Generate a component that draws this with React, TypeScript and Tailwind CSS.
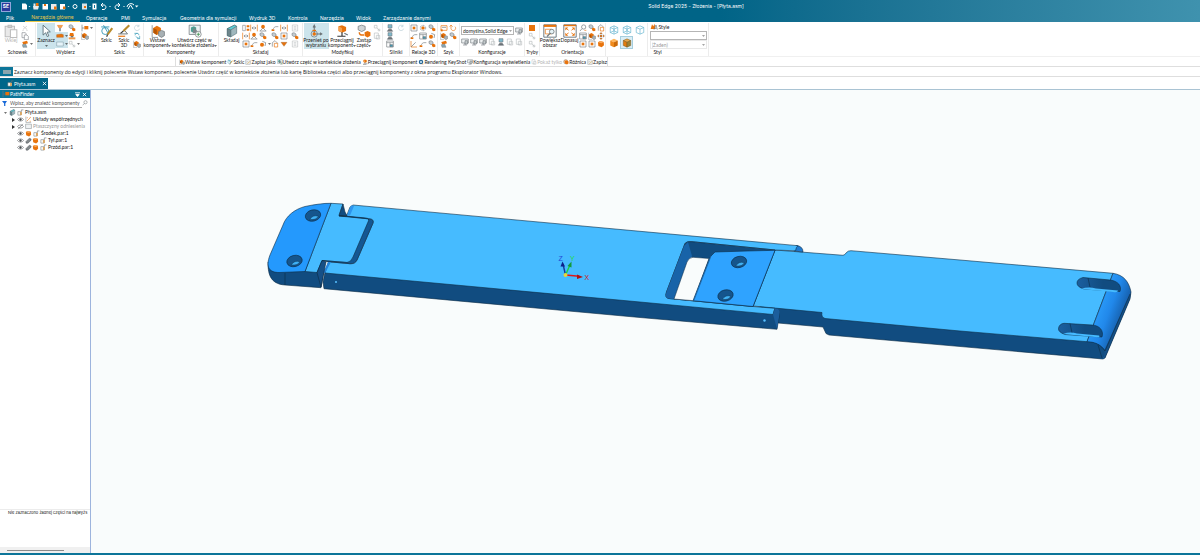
import { ReactNode } from "react";
import clsx from "clsx";

const O = "#e8730c";
const G = "#6d7478";
const T = "#3d9dba";

const ICONS: Record<string, ReactNode> = {
  paste: (
    <g fill="#e9e9e9" stroke="#bdbdbd" strokeWidth="0.9">
      <path d="M1 2h8v9H1z" />
      <path d="M3.5 1h3v2h-3z" fill="#cfcfcf" />
      <path d="M5.5 5h5.5v6.5H5.5z" fill="#fff" />
    </g>
  ),
  cut: (
    <path d="M3 8l6-5M3 3l6 5M2 9.5h2M8 9.5h2" stroke="#c2c2c2" fill="none" />
  ),
  copy: (
    <g fill="#fff" stroke={G} strokeWidth="0.8">
      <path d="M1.5 1h5l1 1.500v6h-6z" />
      <path d="M5 4.500h4l2 2v5H5z" />
    </g>
  ),
  brush: (
    <g>
      <path d="M2 3l7-2 1.500 4-7 2z" fill={O} />
      <path d="M2 7l5-1 2 5H3z" fill="#8aa5b0" stroke={G} strokeWidth="0.6" />
    </g>
  ),
  cursor: (
    <path d="M3.500 1v8.500l2.200-2 1.400 3.300 1.300-.6L7 7l2.700-.3z" fill="#fff" stroke="#4f6570" strokeWidth="0.7" />
  ),
  filter: (
    <g>
      <path d="M2 2h8L8 5.500H4z" fill="#f4a055" stroke={O} strokeWidth="0.6" />
      <path d="M5 6h2v5H5z" fill={G} />
    </g>
  ),
  bar: <path d="M1 4l7-1 3 1v4H1z" fill={O} stroke="#a24d05" strokeWidth="0.5" />,
  rect: <path d="M1 3h10v6H1z" fill="#e6f4fa" stroke="#7f98a3" strokeWidth="0.8" />,
  stamp: (
    <g>
      <path d="M3 1.500h5L9 6H2z" fill={O} />
      <path d="M1 8h10v3H1z" fill="#f09a4b" />
      <path d="M4 6h4v2H4z" fill={G} />
    </g>
  ),
  link: (
    <g>
      <path d="M1.500 2l3-1 3 2v3l-3 1-3-2z" fill="#c5cccf" stroke={G} strokeWidth="0.800" />
      <path d="M6 6.500l2.500-1L11 7v3l-2.500 1L6 9.500z" fill={O} />
    </g>
  ),
  linkGray: (
    <g fill="none" stroke="#b9bec0">
      <path d="M2 2h4v4H2z" />
      <path d="M6 6l4 4" />
      <circle cx="9" cy="9" r="1.500" />
    </g>
  ),
  tree: (
    <g>
      <path d="M1.500 1v10M1.500 6H5" stroke={G} fill="none" />
      <path d="M5 3h6v5H5z" fill={O} />
    </g>
  ),
  box: (
    <g>
      <path d="M6 1l4.500 2L6 5.200 1.500 3z" fill="#ffb65c" />
      <path d="M1.500 3L6 5.200V11L1.500 9z" fill="#f08a1c" />
      <path d="M10.500 3L6 5.200V11l4.500-2z" fill="#cc6a08" />
    </g>
  ),
  boxEdge: (
    <g stroke="#6b531e" strokeWidth="0.500">
      <path d="M6 1l4.500 2L6 5.200 1.500 3z" fill="#e7a54a" />
      <path d="M1.500 3L6 5.200V11L1.500 9z" fill="#e17c10" />
      <path d="M10.500 3L6 5.200V11l4.500-2z" fill="#9b8236" />
    </g>
  ),
  solid: (
    <g>
      <path d="M1.500 3.500L5 1.500l5 1.500.5 5L7 11 2 9z" fill={O} />
      <path d="M1.500 3.500L5 1.500l5 1.500-3.500 2z" fill="#f7a95c" />
    </g>
  ),
  wire: (
    <path d="M6 1l4.500 2v6L6 11 1.500 9V3zM1.500 3L6 5l4.500-2M6 5v6M6 1v6M1.500 9L6 7l4.500 2" fill="none" stroke="#63b3cf" strokeWidth="0.800" />
  ),
  wireOpen: (
    <path d="M6 1l4.500 2v6L6 11 1.500 9V3zM1.500 3L6 5l4.500-2M6 5v6" fill="none" stroke="#63b3cf" strokeWidth="0.800" />
  ),
  sketch: (
    <g fill="none">
      <path d="M1 2.500h7M3 1l4 7" stroke={T} strokeWidth="0.800" />
      <circle cx="4.500" cy="6" r="3" stroke={T} strokeWidth="0.800" />
      <path d="M10.500 3.500L6.500 9" stroke="#b98b2c" strokeWidth="1.800" />
      <path d="M6.500 9l-.8 2" stroke="#333" />
    </g>
  ),
  sketch3d: (
    <g fill="none">
      <path d="M1 8.500h8L7 6" stroke={G} strokeWidth="0.800" />
      <path d="M10.500 1L5.500 6" stroke="#b98b2c" strokeWidth="1.800" />
      <path d="M5.500 6L3 8" stroke="#333" />
      <path d="M1 10.500h6" stroke={O} />
    </g>
  ),
  swirl: <path d="M9 3a4 4 0 1 0 1 4M9 1v3H6" fill="none" stroke="#b9ced6" />,
  swirlTeal: (
    <path d="M2 2h5M3 5a3 3 0 0 1 6 0M4 7l6 3M10 6v4H6" fill="none" stroke={T} />
  ),
  part: (
    <g>
      <path d="M2 3.500l3-2 3.500 2v4L5 9.500l-3-2z" fill={O} />
      <path d="M2 3.500L5 5v4.500l-3-2z" fill="#b55605" />
      <path d="M6.500 6.500L9 5.500l2.500 1V10L9 11.500 6.500 10z" fill="#a7b0b4" stroke={G} strokeWidth="0.600" />
      <path d="M1 1v10.500h5" stroke={G} strokeWidth="0.600" fill="none" />
    </g>
  ),
  create: (
    <g>
      <path d="M1 1h9.500v8H1z" fill="#edf2f4" stroke={G} strokeWidth="0.600" />
      <path d="M2.500 3l2.500-1 2 1v3.500l-2 1-2.500-1z" fill="#4e9f91" />
      <path d="M5 3l3 3v2H4z" fill="#7c8589" />
      <circle cx="8.800" cy="8.800" r="2.500" fill="#fff" stroke={G} strokeWidth="0.600" />
      <path d="M8.800 7.300v3M7.300 8.800h3" stroke="#3c8f4f" strokeWidth="0.700" />
    </g>
  ),
  assemble: (
    <g stroke="#4c6a72" strokeWidth="0.500">
      <path d="M2 4l6-3 2 1v6L5 11l-3-1z" fill="#9fb7bd" />
      <path d="M2 4l3 1v6l-3-1z" fill="#6f868c" />
      <path d="M2 4l6-3 2 1-5 3z" fill="#5ed0d8" />
    </g>
  ),
  mate: (
    <g>
      <path d="M1 2h4v8H1z" fill="#fff" stroke={G} strokeWidth="0.800" />
      <path d="M7 2h4v3H7zM7 7h4v3H7z" fill={O} />
    </g>
  ),
  axis: (
    <g>
      <path d="M1 10.500h10M6 6L2 10M6 6l4 4" stroke={G} fill="none" />
      <circle cx="6" cy="4" r="2.800" fill={O} />
    </g>
  ),
  flush: (
    <g>
      <path d="M1 1v10M11 1v10" stroke={O} fill="none" />
      <path d="M3 6h6M5 4L3 6l2 2M7 4l2 2-2 2" fill="none" stroke={G} strokeWidth="0.900" />
    </g>
  ),
  angle: (
    <g fill="none">
      <path d="M1.500 1.500v9h9" stroke={O} />
      <path d="M1.500 10.500l7-7" stroke={G} />
    </g>
  ),
  cam: (
    <g>
      <circle cx="4.500" cy="7" r="3" fill={O} />
      <path d="M5 2l5 2-1 5" stroke={G} fill="none" />
    </g>
  ),
  gear: (
    <g fill="none" stroke={G}>
      <circle cx="6" cy="6" r="4" strokeDasharray="1.500 0.800" />
      <circle cx="6" cy="6" r="2" fill={O} stroke={O} />
    </g>
  ),
  path: (
    <g fill="none">
      <path d="M1 9c3 0 3-5 6-5h4" stroke={G} strokeWidth="0.900" />
      <path d="M1 8h4v2.500H1z" fill={O} />
    </g>
  ),
  pulley: (
    <g fill="none">
      <path d="M2 10V4l4-3 4 4" stroke={G} strokeWidth="0.900" />
      <path d="M5 5h5v5.500H5z" stroke={O} />
    </g>
  ),
  frame: (
    <g fill="none">
      <path d="M1.500 1.500h9v9h-9z" stroke={G} strokeWidth="0.900" />
      <path d="M4 4h4v4H4z" fill={O} />
    </g>
  ),
  anchor: <path d="M1.500 3.500h9L6 9.500z" fill={O} stroke="#8c5a2a" strokeWidth="0.500" />,
  doc: (
    <g fill="#fff" stroke="#b8bcbe" strokeWidth="0.900">
      <path d="M2 1.500h8v9H2z" />
      <path d="M4 4h4M4 6h4M4 8h4" />
    </g>
  ),
  move: (
    <g fill="none">
      <path d="M4.500 8V1M3.500 3l1-2 1 2" stroke={G} strokeWidth="0.900" />
      <path d="M6 8.500h5M9.500 7.500l1.500 1-1.500 1" stroke={G} strokeWidth="0.900" />
      <circle cx="4.500" cy="8.500" r="2.700" stroke={G} strokeWidth="0.600" />
      <circle cx="4.500" cy="8.500" r="1.500" fill={O} />
      <path d="M3 5.500h3" stroke={O} />
    </g>
  ),
  drag: (
    <g>
      <path d="M3 2l3-1 3.500 1.500V6L6 7.500 3 6z" fill={O} />
      <path d="M3 2l3 1.500v4L3 6z" fill="#f6a04d" />
      <path d="M6 7v3M2 10.500h7" stroke="#333" fill="none" />
      <path d="M8 8l3 1.500" stroke={G} />
    </g>
  ),
  replace: (
    <g>
      <path d="M1 2l3-1 3 1v3L4 6.500 1 5z" fill="#cfd4d6" stroke={G} strokeWidth="0.600" />
      <path d="M6.500 7L9 6l2.500 1v3L9 11.500 6.500 10z" fill={O} />
      <path d="M2 7c0 2.500 1 2.500 4 2.500" stroke={O} strokeWidth="1.300" fill="none" />
    </g>
  ),
  motor: (
    <g>
      <path d="M3 1h6v5H3z" fill="#7fb9cb" stroke={G} strokeWidth="0.800" />
      <path d="M6 6v2M2 11l2-3h4l2 3z" fill={G} stroke={G} strokeWidth="0.800" />
    </g>
  ),
  table: (
    <g fill="#fff" stroke={G} strokeWidth="0.900">
      <path d="M1 1.500h10v9H1z" />
      <path d="M1 4h10M6 4v6" />
      <path d="M6 7h4v3H6z" fill={T} />
    </g>
  ),
  square: <path d="M1.500 1.500h9v9h-9z" fill={O} />,
  pattern: (
    <g>
      <path d="M1.500 2.500h9v7h-9z" fill="none" stroke={O} />
      <path d="M1 8h3v3H1z" fill={O} />
      <path d="M3 5h6" stroke={G} />
    </g>
  ),
  undoArc: <path d="M3 2v5a3.500 3.500 0 1 0 6-3M1 4l2-2.500L5.500 4" fill="none" stroke={O} />,
  display: (
    <g fill="none" stroke={G} strokeWidth="0.900">
      <path d="M1 1.500h10v6H1zM6 7.500v3M3 10.500h6" fill="#edf0f1" />
      <path d="M6 4h4v5H6z" fill="#c4cacc" />
    </g>
  ),
  displayGray: (
    <g fill="none" stroke="#b5babc" strokeWidth="0.900">
      <path d="M2 1.500h6v8H2zM5 5h5v5.500H5z" />
    </g>
  ),
  zoomArea: (
    <g>
      <path d="M.7.700h10.600v10.600H.7z" fill="#fff" stroke="#52616a" strokeWidth="0.700" />
      <path d="M.7.700h10.600v1.800H.7z" fill={O} />
      <path d="M2 4.500h5v4H2z" fill="none" stroke={O} strokeWidth="0.600" />
      <circle cx="7.500" cy="6.500" r="2" fill="#e5f1f5" stroke={G} strokeWidth="0.700" />
      <path d="M6 8l-2.500 2.700" stroke={G} />
    </g>
  ),
  fit: (
    <g>
      <path d="M.7.700h10.600v10.600H.7z" fill="#fff" stroke="#52616a" strokeWidth="0.700" />
      <path d="M.7.700h10.600v1.200H.7z" fill={O} />
      <path d="M2 3h2.500L2 5.500zM10 3v2.500L7.500 3zM2 10V7.500L4.500 10zM10 10H7.500L10 7.500z" fill={O} />
      <path d="M3 4l6 5M9 4L3 9" stroke={O} strokeWidth="0.700" />
      <path d="M4.700 5.200h2.600v2.600H4.700z" fill="#fff" />
    </g>
  ),
  lens: (
    <g fill="none" stroke={G}>
      <circle cx="7" cy="4.500" r="3.200" />
      <path d="M4.500 7L1.500 10.500" />
    </g>
  ),
  lensZoom: (
    <g fill="none" stroke={G}>
      <circle cx="7" cy="4.500" r="3.200" />
      <path d="M4.500 7L1.500 10.500" />
      <path d="M8 9.500h3" stroke={O} />
    </g>
  ),
  pan: (
    <path d="M6 .5l2 2.500H4zM6 11.500L4 9h4zM.5 6L3 4v4zM11.500 6L9 8V4zM4.500 4.500h3v3h-3z" fill={O} stroke={G} strokeWidth="0.400" />
  ),
  styles: (
    <g>
      <path d="M1 9l2-7 2 3 2-4 1 8z" fill={O} />
      <path d="M6 10l3-7 2 7M7 8h3" stroke={G} fill="none" />
    </g>
  ),
  save: (
    <g>
      <path d="M1.500 1.500h7l2 2v7h-9z" fill="#fff" stroke={G} strokeWidth="0.800" />
      <path d="M3 5h4M3 7h2" stroke={G} strokeWidth="0.600" />
      <path d="M5 9.500l5-5" stroke="#c9962e" strokeWidth="1.300" fill="none" />
    </g>
  ),
  render: (
    <g>
      <circle cx="6" cy="6" r="4.500" fill="#2a6a96" />
      <circle cx="6" cy="6" r="2" fill="#d8ecf6" />
      <path d="M8 10h3" stroke={O} />
    </g>
  ),
  diff: (
    <g>
      <circle cx="5.500" cy="5.500" r="4.300" fill="#f2b27a" stroke={G} strokeWidth="0.700" />
      <path d="M4 4l4-1 3 2v4L8 11 4 9z" fill={O} />
    </g>
  ),
  eye: (
    <g fill="none" stroke="#4a4f52" strokeWidth="0.900">
      <path d="M.8 6C3 2.500 9 2.500 11.200 6 9 9.500 3 9.500.8 6z" />
      <circle cx="6" cy="6" r="1.600" fill="#4a4f52" />
    </g>
  ),
  eyeOff: (
    <g fill="none" stroke="#4a4f52" strokeWidth="0.900">
      <path d="M.8 6C3 2.500 9 2.500 11.200 6 9 9.500 3 9.500.8 6z" />
      <path d="M2 10.500L10 1.500" />
    </g>
  ),
  clip: (
    <path d="M1.500 8l6-6L10.500 3.500 10 6l-5 4.500H2z" fill="#83898c" stroke="#4b5154" strokeWidth="0.800" />
  ),
  lock: (
    <g>
      <path d="M1.500 4.500h5v6h-5z" fill="#fff" stroke={G} strokeWidth="0.900" />
      <path d="M5 5h3.500v5.500H5z" fill="#d9a766" />
      <path d="M7.500 5V1.500H11" stroke={G} fill="none" />
    </g>
  ),
  csys: (
    <g fill="none">
      <path d="M1.500 1v10h9" stroke={G} strokeWidth="0.800" />
      <path d="M3 9l6-6M3 3h2M8 9h2M9 1.500v2" stroke={O} />
    </g>
  ),
  plane: <path d="M1 2h10v7.500H1z" fill="#f1f3f4" stroke="#8c9396" />,
};

function Icon({ name, className = "size-2" }: { name: string; className?: string }) {
  return (
    <svg viewBox="0 0 12 12" className={clsx("shrink-0", className)} aria-hidden="true">
      {ICONS[name]}
    </svg>
  );
}

function Caret({ className = "text-[#444]" }: { className?: string }) {
  return (
    <svg viewBox="0 0 4 2" className={clsx("w-[3px] h-[2px] shrink-0", className)} aria-hidden="true">
      <path d="M0 0h4L2 2z" fill="currentColor" />
    </svg>
  );
}

function Group({ label, className, children }: { label?: string; className?: string; children: ReactNode }) {
  return (
    <section className={clsx("flex flex-col shrink-0 border-r border-[#ececec]", className)}>
      <div className="flex h-[26px] items-start justify-center">{children}</div>
      <h3 className="h-[7px] text-center leading-[6px]">{label}</h3>
    </section>
  );
}

type BigProps = { icon: string; lines: string[]; active?: boolean; caret?: boolean; muted?: boolean; className?: string };

function Big({ icon, lines, active, caret, muted, className }: BigProps) {
  return (
    <button
      className={clsx(
        "flex flex-col items-center h-[26px] pt-px shrink-0 leading-[5px]",
        active && "bg-[#cce4ec]",
        muted && "text-[#b3b3b3]",
        className
      )}
    >
      <Icon name={icon} className="size-[14px]" />
      {lines.map((line, i) => (
        <span key={line} className="flex items-center">
          {line}
          {caret && i === lines.length - 1 && lines.length > 1 && <Caret />}
        </span>
      ))}
      {caret && lines.length === 1 && <Caret className="text-[#444] mt-[2px]" />}
    </button>
  );
}

// one column of small ribbon buttons
function Stack({ icons, carets = [], className = "w-[9px]" }: { icons: string[]; carets?: number[]; className?: string }) {
  return (
    <div className={clsx("flex flex-col shrink-0 pt-px", className)}>
      {icons.map((name, i) => (
        <button key={i} aria-label={name} className="flex items-center gap-px h-2">
          <Icon name={name} />
          {carets.includes(i) && <Caret />}
        </button>
      ))}
    </div>
  );
}

function Picker({ label, value, muted, className }: { label: string; value: string; muted?: boolean; className?: string }) {
  return (
    <div className={clsx("flex items-center border bg-white", muted ? "border-[#e8e8e8]" : "border-[#b5b5b5]", className)}>
      <select
        aria-label={label}
        className={clsx("appearance-none grow min-w-0 h-full pl-px outline-none", muted && "text-[#999]")}
      >
        <option>{value}</option>
      </select>
      <Caret className="text-[#888] mr-px" />
    </div>
  );
}

const TABS = [
  { name: "Plik", width: "w-[25px]" },
  { name: "Narzędzia główne", width: "w-[55px]" },
  { name: "Operacje", width: "w-[35px]" },
  { name: "PMI", width: "w-[21px]" },
  { name: "Symulacja", width: "w-[38px]" },
  { name: "Geometria dla symulacji", width: "w-[69px]" },
  { name: "Wydruk 3D", width: "w-[39px]" },
  { name: "Kontrola", width: "w-[32px]" },
  { name: "Narzędzia", width: "w-[36px]" },
  { name: "Widok", width: "w-[27px]" },
  { name: "Zarządzanie danymi", width: "w-[60px]" },
];

const QUICK = [
  { name: "Wstaw komponent", icon: "part" },
  { name: "Szkic", icon: "sketch" },
  { name: "Zapisz jako", icon: "save" },
  { name: "Utwórz część w kontekście złożenia", icon: "create" },
  { name: "Przeciągnij komponent", icon: "drag" },
  { name: "Rendering KeyShot", icon: "render" },
  { name: "Konfiguracja wyświetlenia", icon: "display" },
  { name: "Pokaż tylko", icon: "displayGray", muted: true },
  { name: "Różnica", icon: "diff" },
  { name: "Zapisz", icon: "save" },
];

function TitleBar() {
  return (
    <div className="flex items-center h-[12px] text-white">
      <div className="flex items-center gap-[3px] w-[300px]">
        <div className="ml-px mt-px flex items-center justify-center w-[10px] h-[10px] bg-[#2b3a9c] border border-[#8fa4dc] font-bold leading-[5px]">
          SE
        </div>
        <svg viewBox="0 0 120 10" className="w-[120px] h-[10px] ml-[5px]" aria-hidden="true">
          <g fill="#fff">
            <path d="M3 2.500h3.500l1.500 1.500v4.500H3z" />
            <path d="M14 5h6l-1 3.500h-4.500zM14.500 2.500h2v3h-2z" fill="#e7ebed" />
            <path d="M23.500 3h5.500v5.500h-5.500z" />
            <path d="M32 3h5.500v5.500h-5.500z" fill="#e7ebed" />
            <path d="M41 3h5v5.500h-5z" />
            <path d="M63 2.500h5v6h-5z" fill="#d9e4e8" />
            <path d="M73.500 2.500h4v6h-4z" />
            <path d="M9.500 5h2l-1 1zM48.500 5h2l-1 1zM70 5h2l-1 1zM90 5h2l-1 1zM104 5h2l-1 1zM116 4.500h3.500L117.500 6.500z" />
          </g>
          <g fill={O}>
            <path d="M17 2h2.500v3h-2.500zM25 3h2v2h-2zM35 5.500h2.500v3h-2.500zM44 5.500h2.500v2.500h-2.500zM65 5h2v2h-2z" />
            <path d="M75 4h1v3h-1z" fill="#0c7599" />
          </g>
          <g fill="none" stroke="#fff" strokeWidth="1">
            <circle cx="56" cy="5.500" r="2" />
            <path d="M83 8.500h2c3-1 2-4.500 0-4.500h-3M84 2L82 4l2 2" />
            <path d="M100 8.500h-2c-3-1-2-4.500 0-4.500h3M99 2l2 2-2 2" />
            <path d="M109 8l2.500-4 2.500 4M108 6a4 4 0 0 1 7-2" />
          </g>
        </svg>
      </div>
      <h1 className="grow text-center pr-[108px]">Solid Edge 2025 - Złożenia - [Płyta.asm]</h1>
    </div>
  );
}

function Ribbon() {
  return (
    <div className="flex h-[35px] pt-px bg-white text-[#222] border-b border-[#f0f0f0]">
      <Group label="Schowek" className="w-[36px]">
        <Big icon="paste" lines={["Wklej"]} muted className="w-[19px]" />
        <Stack icons={["cut", "copy", "brush"]} carets={[2]} className="w-[13px]" />
      </Group>
      <Group label="Wybierz" className="w-[60px]">
        <Big icon="cursor" lines={["Zaznacz"]} active caret className="w-[18px]" />
        <div className="flex flex-col pt-px w-[13px]">
          <button aria-label="Filtr" className="flex h-2 pl-px"><Icon name="filter" /></button>
          <button aria-label="Części" className="flex items-center gap-px h-2 px-px bg-[#cce4ec]"><Icon name="bar" /><Caret /></button>
          <button aria-label="Ramka" className="flex items-center gap-px h-2 px-px bg-[#cce4ec]"><Icon name="rect" /><Caret /></button>
        </div>
        <Stack icons={["link", "stamp", "linkGray"]} carets={[2]} className="w-[13px]" />
        <Stack icons={["tree", "part"]} carets={[0]} className="w-[13px]" />
      </Group>
      <Group label="Szkic" className="w-[48px]">
        <Big icon="sketch" lines={["Szkic"]} className="w-[18px]" />
        <Big icon="sketch3d" lines={["Szkic", "3D"]} className="w-[17px]" />
        <Stack icons={["swirl", "swirlTeal", "part"]} />
      </Group>
      <Group label="Komponenty" className="w-[75px]">
        <Big icon="part" lines={["Wstaw", "komponent"]} caret className="w-[27px]" />
        <Big icon="create" lines={["Utwórz część w", "kontekście złożenia"]} caret className="w-[47px]" />
      </Group>
      <Group label="Składaj" className="w-[84px]">
        <Big icon="assemble" lines={["Składaj"]} className="w-[21px]" />
        <Stack icons={["mate", "flush", "frame"]} className="w-2" />
        <Stack icons={["flush", "axis", "path"]} />
        <Stack icons={["axis", "link", "cam"]} carets={[2]} className="w-[12px]" />
        <Stack icons={["path", "link", "pulley"]} />
        <Stack icons={["flush", "frame", "anchor"]} className="w-[11px]" />
        <Stack icons={["doc", "link", "doc"]} />
      </Group>
      <Group label="Modyfikuj" className="w-[80px]">
        <Big icon="move" lines={["Przenieś po", "wybraniu"]} active className="w-[25px]" />
        <Big icon="drag" lines={["Przeciągnij", "komponent"]} caret className="w-[27px]" />
        <Big icon="replace" lines={["Zastąp", "część"]} caret className="w-[17px]" />
        <Stack icons={["linkGray", "displayGray"]} />
      </Group>
      <Group label="Silniki" className="w-[27px]">
        <Stack icons={["motor", "motor", "table"]} className="w-[11px]" />
        <Stack icons={["swirl"]} />
      </Group>
      <Group label="Relacje 3D" className="w-[28px]">
        <Stack icons={["frame", "path", "angle"]} />
        <Stack icons={["gear", "table", "path"]} />
        <Stack icons={["link", "cam", "link"]} />
      </Group>
      <Group label="Szyk" className="w-[22px]">
        <Stack icons={["pattern", "part", "brush"]} />
        <Stack icons={["undoArc", "link"]} />
      </Group>
      <Group label="Konfiguracje" className="w-[65px]">
        <div className="flex flex-col w-[62px] gap-[3px] pt-[3px]">
          <div className="flex items-center gap-px">
            <Picker label="Konfiguracja" value="domyślna,Solid Edge" className="w-[53px] h-[9px]" />
            <button aria-label="Ustawienia"><Icon name="display" className="size-2 block" /></button>
          </div>
          <div className="flex justify-between">
            {["display", "display", "display", "displayGray", "motor", "displayGray", "displayGray"].map((name, i) => (
              <button key={i} aria-label={`Widok ${i + 1}`}><Icon name={name} className="size-2 block" /></button>
            ))}
          </div>
        </div>
      </Group>
      <Group label="Tryby" className="w-[15px]">
        <Stack icons={["square", "linkGray", "linkGray"]} className="w-2" />
      </Group>
      <Group label="Orientacja" className="w-[66px]">
        <Big icon="zoomArea" lines={["Powiększ", "obszar"]} className="w-[20px]" />
        <Big icon="fit" lines={["Dopasuj"]} className="w-[19px]" />
        <Stack icons={["lensZoom", "table", "frame"]} />
        <Stack icons={["link", "part", "frame"]} />
        <Stack icons={["pulley", "pan", "solid"]} className="w-2" />
      </Group>
      <Group className="w-[42px]">
        <div className="grid grid-cols-3 w-[39px]">
          {["wire", "wire", "wireOpen", "box", "boxEdge"].map((name, i) => (
            <button
              key={i}
              aria-label={`Styl widoku ${i + 1}`}
              className={clsx("flex items-center justify-center size-[13px]", i === 4 && "border border-[#a5cede] bg-[#dceef5]")}
            >
              <Icon name={name} className="size-[10px]" />
            </button>
          ))}
        </div>
      </Group>
      <Group className="w-[61px]">
        <div className="flex flex-col w-[57px]">
          <div className="flex items-center gap-px h-2"><Icon name="styles" />Style</div>
          <Picker label="Styl" value="" className="h-[9px]" />
          <Picker label="Styl elementu" value="(Żaden)" muted className="h-[9px]" />
          <span className="pl-[4px] leading-[7px]">Styl</span>
        </div>
      </Group>
    </div>
  );
}

const TREE = [
  { name: "Układy współrzędnych", icons: ["eye", "csys"], open: true },
  { name: "Płaszczyzny odniesienia", icons: ["eyeOff", "plane"], open: true, muted: true },
  { name: "Środek.par:1", icons: ["eye", "solid", "lock"] },
  { name: "Tył.par:1", icons: ["eye", "clip", "solid", "lock"] },
  { name: "Przód.par:1", icons: ["eye", "clip", "solid", "lock"] },
];

function PathFinder() {
  return (
    <aside className="flex flex-col w-[91px] shrink-0 bg-white border-r border-[#9db4dd] text-[#111]">
      <div className="flex items-center h-[8px] px-[2px] bg-[#0c7599] text-white">
        <Icon name="tree" />
        <h2 className="grow">PathFinder</h2>
        <button aria-label="Opcje" className="w-[7px]">
          <svg viewBox="0 0 6 6" className="size-[5px]"><path d="M0 1h6M1 3h4L3 5.500z" stroke="#fff" fill="#fff" /></svg>
        </button>
        <button aria-label="Zamknij" className="w-[6px]">
          <svg viewBox="0 0 6 6" className="size-[5px]"><path d="M1 1l4 4M5 1L1 5" stroke="#fff" /></svg>
        </button>
      </div>
      <div className="flex items-center h-[10px] px-[2px]">
        <svg viewBox="0 0 6 6" className="size-[5px] mr-[3px]"><path d="M0 0h6L4 3v3H2.500V3z" fill="#1769d8" /></svg>
        <input
          aria-label="Szukaj"
          placeholder="Wpisz, aby znaleźć komponenty"
          className="grow min-w-0 h-[9px] border-b border-[#aaa] outline-none placeholder:text-[#555]"
        />
        <Icon name="lens" className="size-[6px]" />
      </div>
      <ul className="pt-px grow leading-[7px]">
        <li className="flex items-center h-[7px] pl-[4px] gap-px">
          <Caret />
          <Icon name="assemble" className="size-[7px] ml-px" />
          <Icon name="lock" className="size-[7px]" />
          <span>Płyta.asm</span>
        </li>
        {TREE.map((row) => (
          <li key={row.name} className={clsx("flex items-center h-[7px] pl-[12px]", row.muted && "text-[#999]")}>
            <span className="w-[5px]">
              {row.open && (
                <svg viewBox="0 0 3 4" className="w-[3px] h-[4px]"><path d="M0 0l3 2-3 2z" fill="#333" /></svg>
              )}
            </span>
            {row.icons.map((name) => (
              <Icon key={name} name={name} className={clsx("size-[7px]", name !== "clip" && "mr-px")} />
            ))}
            <span>{row.name}</span>
          </li>
        ))}
      </ul>
      <p className="h-[38px] border-t border-[#ececec] pl-[8px] text-[4px] font-['Inter','Noto_Sans',sans-serif]">
        Nie zaznaczono żadnej części na najwyżs
      </p>
      <div className="flex items-center h-[6px] bg-[#f0f0f0] pl-[7px]">
        <div className="w-[57px] h-px bg-[#8a8a8a]" />
      </div>
    </aside>
  );
}

function Model() {
  const edge = { stroke: "#0c2b45", strokeWidth: 0.6, strokeLinejoin: "round" as const };
  return (
    <svg viewBox="91 90 1109 463" className="w-full h-full" role="img" aria-label="Płyta.asm">
      <defs>
        <linearGradient id="round" gradientUnits="userSpaceOnUse" x1="1098" y1="305" x2="1122" y2="314">
          <stop offset="0" stopColor="#2a9cfb" />
          <stop offset="0.500" stopColor="#2188ea" />
          <stop offset="1" stopColor="#1763b2" />
        </linearGradient>
        <linearGradient id="side" x1="0" x2="1">
          <stop offset="0" stopColor="#1b5f9f" />
          <stop offset="0.600" stopColor="#114c80" />
        </linearGradient>
      </defs>

      {/* hinge end */}
      <path d="M268 262C268 272 269 284 285 285L321 287.700L324 270L322 259L305 260z" fill="#114c80" {...edge} />
      <path d="M331 203.300L343 204L339 215.500L366 218Q370 218.500 369 222L353.500 259Q352 263 347 262.500L322 260.500L317 272.500L305 271.500z" fill="#46bbff" {...edge} />
      <path d="M331 203.300C324 203 312 205 305 206.500C295 209 286 216 283 225L270 255C265 268 270 272.500 279 272.500L305 271.500z" fill="#2499fd" {...edge} />
      <path d="M285 273v12" {...edge} />

      {/* right arm */}
      <path d="M753 300L822 306L880 318L1089 337L1106 349L1103 359L880 339.500L829 335L826 333.500L823 327L778 323z" fill="#114c80" {...edge} />
      <path d="M775 250L843 255.300Q845 255 846 253Q848 250.500 851 250.700L960 260L1113 273.300L1087 341.700L960 331L825 318.500Q821 317 822 312.500L753 306z" fill="#46bbff" {...edge} />
      <path d="M1113 273.300C1124 275 1129 282 1131 292L1130 299L1105 358L1103 359L1105 350C1100 344 1094 342 1087 341.700z" fill="url(#round)" />
      <path d="M1131 292L1130 299L1105 358L1103 357L1104 351z" fill="#155087" />
      <path d="M1087 341.700C1096 342 1101 345 1105 351L1103 359L1092 357z" fill="#114c80" />
      <path d="M1113 273.300C1124 275 1129 282 1131 292L1130 299L1105 358L1103 359M1113 273.300L1087 341.700C1096 342 1101 345 1105 351L1130 294M1098 345l4 13" fill="none" {...edge} />
      <path d="M1083 277.500L1110 280C1118 281 1122 286 1120 291.500L1084 289Q1077 287 1077 283Q1077 279 1083 277.500z" fill="url(#side)" {...edge} />
      <path d="M1081 289Q1088 286.500 1096 288.500L1118 290.500Q1118 293 1113 292z" fill="#46bbff" />
      <path d="M1088 278l2 9" {...edge} />
      <path d="M1064 323.300L1092 325C1100 325.500 1104 331 1102 337L1065 334.500Q1058 332 1058.500 328.500Q1059 324 1064 323.300z" fill="url(#side)" {...edge} />
      <path d="M1063 334Q1070 331.500 1077 333.500L1099 335.500Q1101 338 1095 337z" fill="#46bbff" />
      <path d="M1070 323.500l2 9" {...edge} />

      {/* main plate */}
      <path d="M325 272L775 309Q780 309 779.500 314L777 329.300L640 317.500L324 288.700L323 282z" fill="#114c80" {...edge} />
      <path d="M796 245.500Q803 246 803 252L794 251z" fill="#1f7ad0" {...edge} />
      <path
        fillRule="evenodd"
        d="M353 205L640 231.300L798 245.700Q796 247 795.500 250.800L775 250L692 241.700Q686 241.500 685 243.500L666.500 292Q664.500 298 669 298.500L753 306.500L775 308.300Q774 310 773 314.500L640 302L325 273L328.500 261.700L350 263.700Q355 264 357 260L373 223Q374 219.500 370 219L339 216L346.500 216L350 207z"
        fill="#46bbff"
        {...edge}
      />
      <path d="M339 215.500L366 218Q370 218.500 368 222L353 257Q351 262 347 262.500L322 260.500L328 261.700L350 263.700Q355 264 357 260L373 223Q374 219.500 370 219z" fill="#145792" {...edge} />
      <path d="M351 205.500L347 215.500L350 215.500L354 206z" fill="#2e95ee" />
      <path d="M343 204L339 215.500L347 215.500L345 212z" fill="#114c80" {...edge} />
      <path d="M328 262L323 273L325 273L331 262z" fill="#2485dd" />
      <path d="M775 308.300Q781 309 779.500 314L777 329L773 314.500Z" fill="#1c5e9c" />
      <path d="M317 272.500L322 260.500L326 262L321 287z" fill="#164f86" {...edge} />

      {/* pocket */}
      <path d="M692 241.700L775 250L753 306.500L669 298.500Q664.500 298 666.500 292L685 243.500Q687 241 692 241.700z" fill="#114c80" {...edge} />
      <path d="M688 242L692 256L674 299L669 298.500Q664.500 298 666.500 292L684 246z" fill="#1863a8" />
      <path d="M693 257.300L709 258.500L693.500 300.700L674 299L687 262Q689 257.500 693 257.300z" fill="#f9fcfc" stroke="#0c2b45" strokeWidth="0.500" />
      <path d="M715 252Q745 251 775 250.300L753 306.500L693 300.700L710 257z" fill="#2fa3ff" {...edge} />
      <path d="M711 256L694 300" stroke="#1c5e9c" strokeWidth="0.800" />

      {/* screw holes */}
      {[[313, 215.500], [294.500, 261], [739, 262], [725.500, 295.500]].map(([x, y]) => (
        <g key={x} transform={`rotate(-14 ${x} ${y})`}>
          <ellipse cx={x} cy={y} rx="7.800" ry="5.600" fill="#15558d" {...edge} />
          <path d={`M${x - 4} ${y + 3}q4 -4 9 -1q-3 3.500 -9 1z`} fill="#3fb0f5" stroke="#0c2b45" strokeWidth="0.400" />
        </g>
      ))}
      <circle cx="336" cy="282" r="1" fill="#58c0ff" />
      <circle cx="764.500" cy="320.500" r="1.200" fill="#58c0ff" />

      {/* axis triad */}
      <g strokeWidth="1.400">
        <path d="M565.500 275L563 264" stroke="#123a9e" />
        <path d="M562.500 261.500l2.500 5h-4.500z" fill="#0d1f8c" />
        <path d="M565.500 275L570 265" stroke="#1fd043" />
        <path d="M571.500 261.500l0 6-4-1.500z" fill="#149b3a" />
        <path d="M565.500 275L579 276.300" stroke="#e01818" />
        <path d="M583 277l-6 2v-4.500z" fill="#b01212" />
        <circle cx="565.500" cy="275" r="2" fill="#e8d43a" />
      </g>
      <g fontFamily="Liberation Sans, sans-serif" fontSize="7">
        <text x="558.500" y="261" fill="#2347d6">Z</text>
        <text x="570" y="261" fill="#22dd44">Y</text>
        <text x="584.500" y="279.500" fill="#cf2020">X</text>
      </g>
    </svg>
  );
}

export default function App() {
  return (
    <div className="flex flex-col min-h-screen bg-white font-['Lato','Noto_Sans',sans-serif] text-[5px] leading-[6px] whitespace-nowrap">
      <header className="bg-gradient-to-r from-[#006487] from-60% to-[#3f92ae] font-['Inter','Noto_Sans',sans-serif]">
        <TitleBar />
        <nav className="flex h-[10px] text-white">
          {TABS.map((tab, i) => (
            <button
              key={tab.name}
              className={clsx(
                "h-[10px] shrink-0 pt-px",
                tab.width,
                i === 1 ? "text-center text-[#e8c84a] border-b border-[#e8c84a]" : "text-left pl-[6px]"
              )}
            >
              {tab.name}
            </button>
          ))}
        </nav>
      </header>
      <Ribbon />
      <div className="flex h-[10px] pl-[175px] border-b border-[#dedede]">
        <div className="flex items-center gap-px border-x border-[#dedede] pl-[3px]">
          {QUICK.map((cmd) => (
            <button
              key={cmd.name}
              className={clsx("flex items-center shrink-0", cmd.muted ? "text-[#b5b5b5]" : "text-[#222]")}
            >
              <Icon name={cmd.icon} className="size-[6px]" />
              {cmd.name}
            </button>
          ))}
        </div>
      </div>
      <div className="flex items-center h-[10px] border-b border-[#dedede] font-['Open_Sans','Noto_Sans',sans-serif] text-[#111]">
        <div className="flex items-center justify-center w-[13px] h-[9px] mr-px bg-[#0c7599]">
          <div className="w-[8px] h-[4px] bg-[#8ba5ae]" />
        </div>
        <p>
          Zaznacz komponenty do edycji i kliknij polecenie Wstaw komponent, polecenie Utwórz część w kontekście złożenia lub kartę Biblioteka części albo przeciągnij komponenty z okna programu Eksplorator Windows.
        </p>
      </div>
      <div className="flex h-[13px] pt-px border-b border-[#a9c3d3]">
        <div className="flex items-center w-[48px] pl-[7px] bg-[#00668a] text-white">
          <Icon name="lock" className="size-[7px]" />
          <span className="grow">Płyta.asm</span>
          <button aria-label="Zamknij kartę" className="w-[6px]">
            <svg viewBox="0 0 6 6" className="size-[5px]"><path d="M1 1l4 4M5 1L1 5" stroke="#fff" /></svg>
          </button>
        </div>
      </div>
      <div className="flex grow">
        <PathFinder />
        <main className="grow min-w-0 bg-[#f9fcfc]">
          <Model />
        </main>
      </div>
      <footer className="h-[2px] bg-[#0c7599]" />
    </div>
  );
}
